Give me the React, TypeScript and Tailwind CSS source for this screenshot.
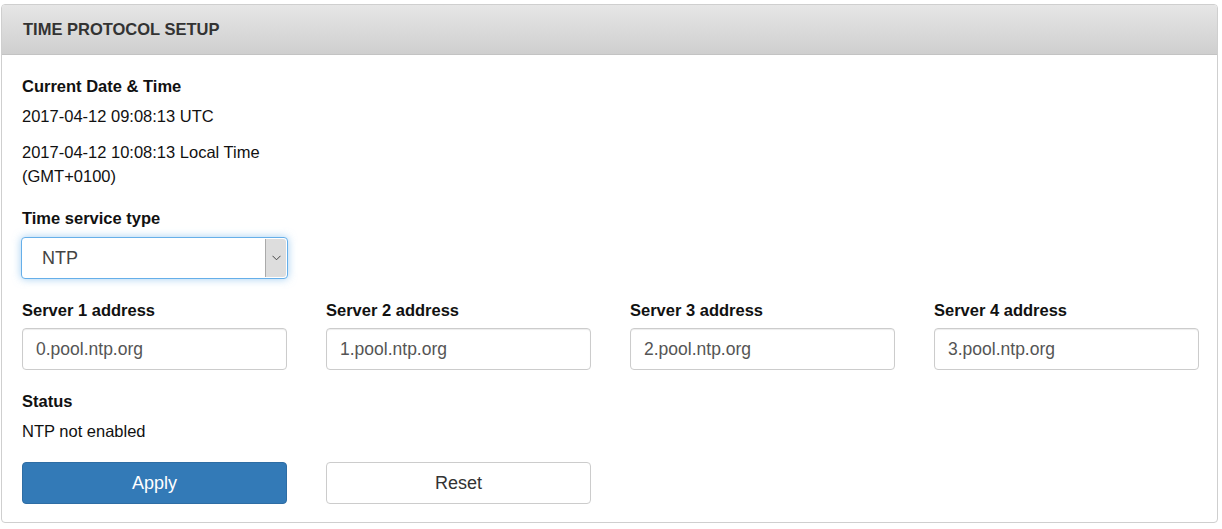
import React from "react";

const servers = ["0.pool.ntp.org", "1.pool.ntp.org", "2.pool.ntp.org", "3.pool.ntp.org"];

function Label({ children }: { children: React.ReactNode }) {
  return <div className="text-[16.5px] leading-[24px] font-bold text-[#111]">{children}</div>;
}

export default function App() {
  return (
    <div className="min-h-[529px] bg-white pt-[4px] pl-[1px] font-['Liberation_Sans',Arial,sans-serif]">
      <div className="w-[1217px] h-[519px] border border-[#cfcfcf] rounded-[4px] overflow-hidden bg-white">
        {/* Header */}
        <div className="h-[50px] flex items-center px-[21px] border-b border-[#c3c3c3] bg-gradient-to-b from-[#e6e6e6] to-[#cfcfcf]">
          <h3 className="text-[16.5px] font-bold text-[#333]">TIME PROTOCOL SETUP</h3>
        </div>

        {/* Body */}
        <div className="px-[20px] pt-[19px] text-[16.5px] leading-[24px] text-[#111]">
          <Label>Current Date &amp; Time</Label>
          <div className="mt-[6px]">2017-04-12 09:08:13 UTC</div>
          <div className="mt-[12px] w-[265px]">2017-04-12 10:08:13 Local Time (GMT+0100)</div>

          <div className="mt-[18px]">
            <Label>Time service type</Label>
          </div>
          <div className="mt-[7px] -ml-[1px] w-[267px] h-[42px] flex border border-[#66afe9] rounded-[4px] shadow-[0_0_8px_rgba(102,175,233,0.6)] bg-white overflow-hidden">
            <div className="flex-1 flex items-center pl-[20px] text-[18px] text-[#444]">NTP</div>
            <div className="w-[21px] my-[1px] mr-[1px] bg-[#dddddd] border-l border-[#aaaaaa] rounded-r-[3px] flex items-center justify-center">
              <svg width="9" height="6" viewBox="0 0 9 6" fill="none">
                <path d="M0.5 0.8 L4.5 4.8 L8.5 0.8" stroke="#444" strokeWidth="1" />
              </svg>
            </div>
          </div>

          <div className="mt-[19px] grid grid-cols-4 gap-x-[39px] w-[1177px]">
            {servers.map((s, i) => (
              <div key={s}>
                <Label>Server {i + 1} address</Label>
                <div className="mt-[6px] h-[42px] border border-[#cccccc] rounded-[4px] flex items-center pl-[13px] text-[17.5px] text-[#555] shadow-[inset_0_1px_1px_rgba(0,0,0,0.075)]">
                  {s}
                </div>
              </div>
            ))}
          </div>

          <div className="mt-[19px]">
            <Label>Status</Label>
          </div>
          <div className="mt-[6px]">NTP not enabled</div>

          <div className="mt-[19px] grid grid-cols-4 gap-x-[39px] w-[1177px]">
            <button className="h-[42px] rounded-[4px] bg-[#337ab7] border border-[#2e6da4] text-white text-[18px]">
              Apply
            </button>
            <button className="h-[42px] rounded-[4px] bg-white border border-[#cccccc] text-[#333] text-[18px]">
              Reset
            </button>
          </div>
        </div>
      </div>
    </div>
  );
}
